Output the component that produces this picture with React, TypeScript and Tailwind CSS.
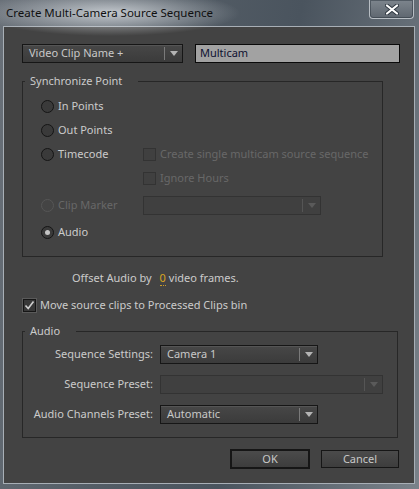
import React from 'react';

const font = "font-['Noto_Sans','Open_Sans',sans-serif]";

function Arrow({ disabled }: { disabled?: boolean }) {
  return (
    <svg width="8" height="5" viewBox="0 0 8 5">
      <path d="M0 0H8L4 5Z" fill={disabled ? '#5a5a5a' : '#b4b4b4'} />
    </svg>
  );
}

function Select({ value, width, disabled }: { value?: string; width: number; disabled?: boolean }) {
  return (
    <div
      className={
        'flex h-[19px] items-center border ' +
        (disabled
          ? 'border-[#333333] bg-[#404040]'
          : 'border-[#161616] bg-[linear-gradient(#474747,#3b3b3b)] shadow-[inset_0_1px_0_#555555]')
      }
      style={{ width }}
    >
      <span className="flex-1 truncate pl-[6px] text-[#c8c8c8]">{value}</span>
      <span className={'h-[13px] w-px ' + (disabled ? 'bg-[#555555]' : 'bg-[#7a7a7a]')} />
      <span className="flex w-[17px] items-center justify-center">
        <Arrow disabled={disabled} />
      </span>
    </div>
  );
}

function Radio({ label, checked, disabled }: { label: string; checked?: boolean; disabled?: boolean }) {
  return (
    <div className="flex items-center gap-[4px]">
      <span
        className={
          'flex h-[13px] w-[13px] items-center justify-center rounded-full border ' +
          (disabled ? 'border-[#565656] bg-[#444444]' : 'border-[#151515] bg-[#3a3a3a]')
        }
      >
        {checked && <span className="h-[5px] w-[5px] rounded-full bg-[#c4c4c4]" />}
      </span>
      <span className={disabled ? 'text-[#686868]' : 'text-[#cbcbcb]'}>{label}</span>
    </div>
  );
}

function Check({ label, checked, disabled }: { label: string; checked?: boolean; disabled?: boolean }) {
  return (
    <div className="flex items-center gap-[4px]">
      <span
        className={
          'flex h-[13px] w-[13px] items-center justify-center border ' +
          (disabled
            ? 'border-[#333333] bg-[#404040]'
            : 'border-[#161616] bg-[#383838] outline outline-1 outline-[#5a5a5a]')
        }
      >
        {checked && (
          <svg width="11" height="11" viewBox="0 0 11 11">
            <path d="M1.5 5.5L4.2 8.5L9.5 1.5" stroke="#cfcfcf" strokeWidth="1.6" fill="none" />
          </svg>
        )}
      </span>
      <span className={disabled ? 'text-[#686868]' : 'text-[#cbcbcb]'}>{label}</span>
    </div>
  );
}

function Group({ label, className, children }: { label: string; className: string; children: React.ReactNode }) {
  return (
    <div className={'relative border border-[#272727] ' + className}>
      <span className="absolute -top-[9px] left-[2px] bg-[#434343] pl-[5px] pr-[16px] leading-[16px] text-[#cbcbcb]">
        {label}
      </span>
      {children}
    </div>
  );
}

function Button({ label, primary }: { label: string; primary?: boolean }) {
  return (
    <button
      className={
        'flex items-center justify-center bg-[linear-gradient(#4b4b4b,#3d3d3d)] text-[#c8c8c8] ' +
        (primary ? 'h-[20px] w-[80px] border-2 border-[#161616]' : 'h-[18px] w-[78px] border border-[#161616]')
      }
    >
      {label}
    </button>
  );
}

export default function App() {
  return (
    <div
      className={
        'flex h-[489px] w-[419px] flex-col bg-[linear-gradient(100deg,#6a7179_0%,#545d66_35%,#4a545e_60%,#7a828a_100%)] text-[11px] ' +
        font
      }
    >
      {/* title bar */}
      <div className="relative flex h-[26px] shrink-0 items-start">
        <div className="absolute -left-[20px] -top-[10px] h-[46px] w-[260px] rounded-full bg-[radial-gradient(closest-side,rgba(230,234,238,0.75),rgba(230,234,238,0))]" />
        <span className="relative ml-[6px] mt-[5px] text-[11.5px] leading-[16px] text-[#101010]">
          Create Multi-Camera Source Sequence
        </span>
        <div className="relative ml-auto mr-[5px] flex h-[19px] w-[45px] items-center justify-center rounded-b-[4px] border border-t-0 border-[#b8bec4] bg-[linear-gradient(#7d858d,#5f6770)] shadow-[inset_0_0_0_1px_rgba(40,50,60,0.5)]">
          <svg width="14" height="11" viewBox="0 0 14 11">
            <path d="M2 1.5L12 9.5M12 1.5L2 9.5" stroke="#2d3640" strokeWidth="4" strokeLinecap="round" />
            <path d="M2 1.5L12 9.5M12 1.5L2 9.5" stroke="#ffffff" strokeWidth="2.2" strokeLinecap="round" />
          </svg>
        </div>
      </div>

      {/* client area */}
      <div className="ml-[3px] h-[458px] w-[412px] border border-[#a8afb6] bg-[#434343]">
        <div className="flex flex-col pl-[18px] pt-[17px]">
          <div className="flex items-center gap-[12px]">
            <Select value="Video Clip Name +" width={161} />
            <div className="flex h-[19px] w-[205px] items-center border border-[#0a0a0a] bg-[#a2a2a2] pl-[4px] text-[#0d1030]">
              Multicam
            </div>
          </div>

          <Group label="Synchronize Point" className="mt-[18px] w-[361px] pb-[12px] pl-[18px] pt-[12px]">
            <div className="grid grid-cols-[102px_1fr] [grid-template-rows:24px_24px_24px_24px_30px_24px] items-center">
              <Radio label="In Points" />
              <div />
              <Radio label="Out Points" />
              <div />
              <Radio label="Timecode" />
              <Check label="Create single multicam source sequence" disabled />
              <div />
              <Check label="Ignore Hours" disabled />
              <Radio label="Clip Marker" disabled />
              <Select width={178} disabled />
              <Radio label="Audio" checked />
              <div />
            </div>
          </Group>

          <div className="mt-[13px] flex h-[16px] items-center pl-[50px] text-[#cbcbcb]">
            <span>Offset Audio by</span>
            <span className="ml-[8px] border-b border-dotted border-[#c99a2a] leading-[14px] text-[#d9a521]">0</span>
            <span className="ml-[3px]">video frames.</span>
          </div>

          <div className="mt-[11px] flex h-[16px] items-center pl-[1px]">
            <Check label="Move source clips to Processed Clips bin" checked />
          </div>

          <Group label="Audio" className="mt-[18px] w-[376px] pb-[13px] pt-[13px]">
            <div className="grid grid-cols-[130px_1fr] items-center gap-x-[7px] gap-y-[11px]">
              <span className="text-right text-[#cbcbcb]">Sequence Settings:</span>
              <Select value="Camera 1" width={158} />
              <span className="text-right text-[#cbcbcb]">Sequence Preset:</span>
              <Select width={223} disabled />
              <span className="text-right text-[#cbcbcb]">Audio Channels Preset:</span>
              <Select value="Automatic" width={158} />
            </div>
          </Group>

          <div className="mr-[15px] mt-[11px] flex items-center justify-end gap-[11px]">
            <Button label="OK" primary />
            <Button label="Cancel" />
          </div>
        </div>
      </div>
    </div>
  );
}
